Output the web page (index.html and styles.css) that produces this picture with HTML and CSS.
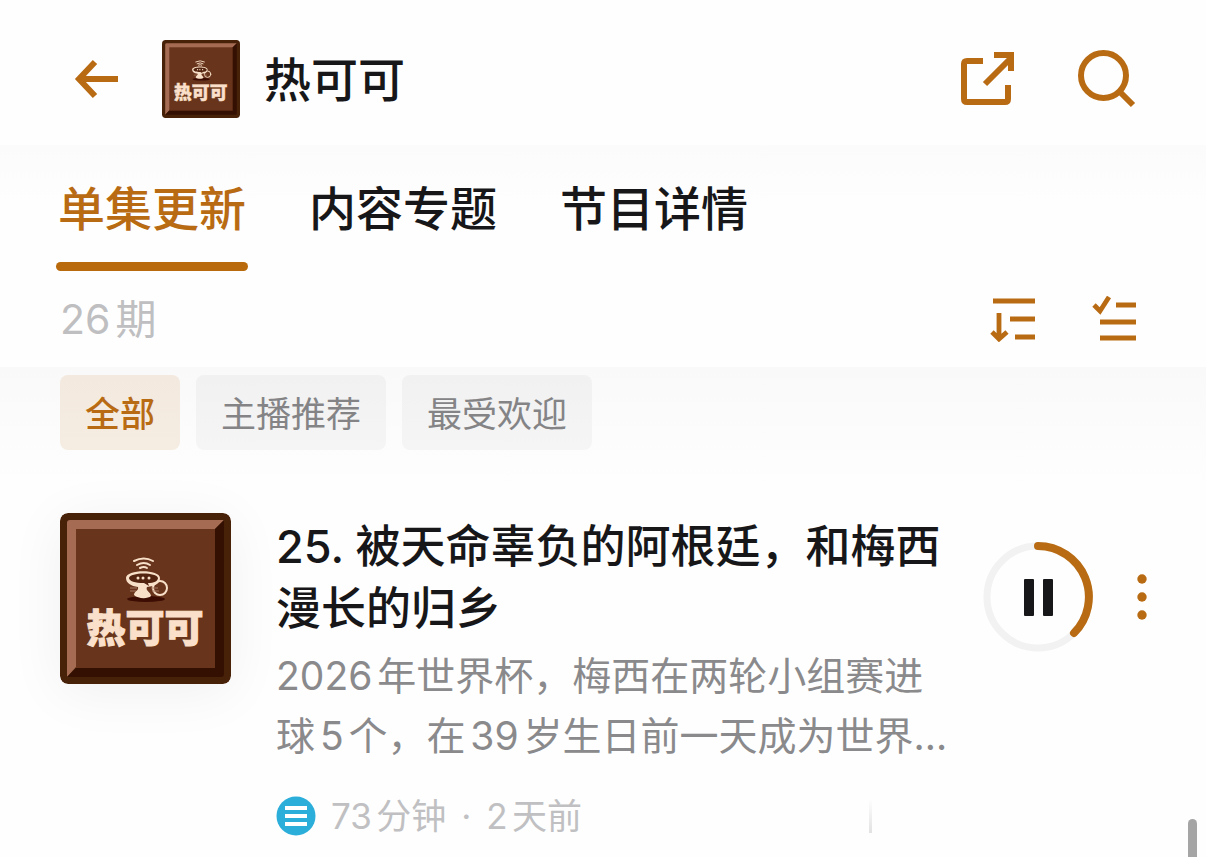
FILE: index.html
```html
<!DOCTYPE html>
<html lang="zh-CN">
<head>
<meta charset="utf-8">
<meta name="viewport" content="width=device-width, initial-scale=1">
<title>热可可</title>
<link rel="stylesheet" href="styles.css">
</head>
<body>
<svg class="defs" aria-hidden="true">
  <symbol id="cover" viewBox="0 0 171 171">
    <rect width="171" height="171" rx="8" fill="#482109"/>
    <path d="M7 10a3 3 0 0 1 3-3H164L154 17 16 154 7 164Z" fill="#a56c53"/>
    <path d="M164 7V161a3 3 0 0 1-3 3H7L17 154 154 17Z" fill="#341002"/>
    <rect x="16" y="16" width="139" height="139" fill="#68341c"/>
    <ellipse cx="86" cy="86" rx="19" ry="3" fill="#3d0d04"/>
    <g fill="none" stroke="#f8dfc8" stroke-linecap="round">
      <path d="M74 48q10-5 19 0M77 52q7-4 13 0" stroke-width="2"/>
      <path d="M80 55q4-2 7 0" stroke-width="2"/>
      <circle cx="100" cy="75" r="7" stroke-width="2"/>
    </g>
    <path d="M66 65c0-9 34-9 34 0 0 5-4 7-7 8l-6 1c-2 4 4 5 4 9-3 3-13 3-17-1 0-4 5-4 4-8-7-1-12-4-12-9Z" fill="#f8dfc8"/>
    <path d="M69 65c1-6 28-6 29 0 0 3-4 5-10 5l1 3-5-3c-9 0-15-2-15-5Z" fill="#53240f"/>
    <g fill="#f8dfc8"><circle cx="78" cy="65" r="1.5"/><circle cx="83" cy="65" r="1.5"/><circle cx="89" cy="65" r="1.5"/></g>
    <path d="M70 75h7M70 78h6M91 75h7M92 78h7" stroke="#a77961"/>
  </symbol>
</svg>

<header class="topbar">
  <button class="icon-button" aria-label="返回">
    <svg width="44" height="40" viewBox="0 0 44 40"><path d="M21 3 5 20l16 17M5 20h39" fill="none" stroke="currentColor" stroke-width="6"/></svg>
  </button>
  <svg class="topbar-cover" viewBox="0 0 171 171" role="img" aria-label="热可可封面"><use href="#cover"/><text x="85" y="129" text-anchor="middle" class="cover-text">热可可</text></svg>
  <h1 class="topbar-title">热可可</h1>
  <button class="icon-button" aria-label="分享">
    <svg width="56" height="56" viewBox="0 0 56 56"><path d="M23 10H7Q4 10 4 13V48q0 3 3 3H45q3 0 3-3V34M25 33 50 8" fill="none" stroke="currentColor" stroke-width="6"/><path d="M34 1H54V20H48V7H34Z" fill="currentColor"/></svg>
  </button>
  <button class="icon-button" aria-label="搜索">
    <svg width="58" height="58" viewBox="0 0 58 58"><circle cx="25.500" cy="25.500" r="22.500" fill="none" stroke="currentColor" stroke-width="6"/><path d="m41 41 14 14" stroke="currentColor" stroke-width="6"/></svg>
  </button>
</header>

<section class="panel">
  <nav class="tabs">
    <a class="tab tab-active" href="#episodes" aria-current="page">单集更新</a>
    <a class="tab" href="#topics">内容专题</a>
    <a class="tab" href="#details">节目详情</a>
  </nav>
  <div class="toolbar">
    <span class="count">26期</span>
    <button class="icon-button" aria-label="排序">
      <svg width="46" height="46" viewBox="0 0 46 46"><path d="M3 5h42M20 23h25M25 41h20M9 17v27M2 36l7 7 8-7" fill="none" stroke="currentColor" stroke-width="4.800"/></svg>
    </button>
    <button class="icon-button" aria-label="多选">
      <svg width="46" height="46" viewBox="0 0 46 46"><path d="m2 9 6 6L17 1M24 9h20M8 26h36M8 42h36" fill="none" stroke="currentColor" stroke-width="4.800"/></svg>
    </button>
  </div>
</section>

<main class="content" id="episodes">
  <div class="chips">
    <button class="chip chip-active" aria-pressed="true">全部</button>
    <button class="chip" aria-pressed="false">主播推荐</button>
    <button class="chip" aria-pressed="false">最受欢迎</button>
  </div>

  <article class="episode">
    <svg class="episode-cover" viewBox="0 0 171 171" role="img" aria-label="热可可封面"><use href="#cover"/><text x="85" y="129" text-anchor="middle" class="cover-text">热可可</text></svg>
    <div class="episode-body">
      <h2 class="episode-title">25. 被天命辜负的阿根廷，和梅西漫长的归乡</h2>
      <p class="episode-summary">2026年世界杯，梅西在两轮小组赛进<br>球5个，在39岁生日前一天成为世界…</p>
      <div class="meta">
        <svg width="40" height="40" viewBox="0 0 40 40" aria-hidden="true"><circle cx="20" cy="20" r="19.500" fill="#2baeda"/><path d="M9 12h22M9 20h22M9 28h22" stroke="#fff" stroke-width="4"/></svg>
        <span>73分钟</span>
        <span>·</span>
        <span>2天前</span>
        <i class="meta-fade"></i>
      </div>
    </div>
    <div class="episode-actions">
      <button class="icon-button" aria-label="暂停">
        <svg width="110" height="110" viewBox="0 0 110 110"><circle cx="55" cy="55" r="51" fill="none" stroke="#f2f2f2" stroke-width="7"/><path d="M55 4A51 51 0 0 1 91 91" fill="none" stroke="#b86b13" stroke-width="8" stroke-linecap="round"/><rect x="41" y="37" width="10" height="37" rx="1" fill="#171719"/><rect x="60" y="37" width="10" height="37" rx="1" fill="#171719"/></svg>
      </button>
      <button class="icon-button" aria-label="更多">
        <svg width="10" height="48" viewBox="0 0 10 48"><g fill="currentColor"><circle cx="5" cy="6" r="4.700"/><circle cx="5" cy="24" r="4.700"/><circle cx="5" cy="42" r="4.700"/></g></svg>
      </button>
    </div>
  </article>
</main>
<div class="scroll-thumb"></div>
</body>
</html>
```
FILE: styles.css
```css
* {
  box-sizing: border-box;
}

body {
  margin: 0;
  background: #fefefe;
  color: #171719;
  font-family: Inter, "Noto Sans CJK SC", sans-serif;
  text-autospace: normal;
}

h1, h2, p {
  margin: 0;
}

svg {
  display: block;
}

.defs {
  position: absolute;
  width: 0;
  height: 0;
}

.cover-text {
  font-family: "Noto Sans CJK SC", sans-serif;
  font-size: 39px;
  font-weight: 900;
  fill: #fae0ca;
  stroke: #fae0ca;
  stroke-width: 1px;
}

.icon-button {
  display: block;
  flex: none;
  padding: 0;
  border: 0;
  background: none;
  color: #b86b13;
}

.topbar {
  display: flex;
  align-items: center;
  padding: 40px 70px 27px 74px;
}

.topbar-cover {
  width: 78px;
  height: 78px;
  margin: 0 24px 0 44px;
}

.topbar-title {
  flex: 1;
  padding-top: 2px;
  font-size: 47px;
  font-weight: 500;
  line-height: 76px;
}

.topbar .icon-button + .icon-button {
  margin-left: 62px;
}

.panel {
  padding: 27px 68px 20px 56px;
  background: linear-gradient(#fbfbfb, #fefefe 60px);
}

.tabs {
  display: flex;
  gap: 59px;
}

.tab {
  padding: 0 2px 17px;
  border-bottom: 9px solid transparent;
  color: inherit;
  font-size: 47px;
  font-weight: 500;
  line-height: 73px;
  text-decoration: none;
}

.tab-active {
  position: relative;
  color: #b86b13;
}

.tab-active::after {
  content: "";
  position: absolute;
  left: 0;
  right: 0;
  bottom: -9px;
  height: 9px;
  border-radius: 5px;
  background: #b96a0c;
}

.toolbar {
  display: flex;
  align-items: center;
  gap: 56px;
  padding: 20px 0 0 4px;
}

.count {
  flex: 1;
  color: #bfbfc1;
  font-size: 41px;
  line-height: 56px;
}

.content {
  padding: 8px 59px 0 60px;
  background: linear-gradient(#f9f9f9, #fefefe 120px);
}

.chips {
  display: flex;
  gap: 16px;
}

.chip {
  padding: 4px 25px 0;
  border: 0;
  border-radius: 8px;
  background: linear-gradient(#f1f1f1, #f5f5f6);
  color: #848486;
  font: inherit;
  font-size: 35px;
  line-height: 71px;
}

.chip-active {
  background: linear-gradient(#f3e9de, #f6ede2);
  color: #b86b13;
  font-weight: 500;
}

.episode {
  display: flex;
  align-items: flex-start;
  padding-top: 63px;
}

.episode-cover {
  flex: none;
  width: 171px;
  height: 171px;
  margin-right: 45px;
  border-radius: 8px;
  box-shadow: 0 8px 56px rgba(0, 0, 0, 0.06);
}

.episode-body {
  flex: 1;
  min-width: 0;
}

.episode-title {
  padding-top: 3px;
  font-size: 45px;
  font-weight: 500;
  line-height: 62px;
}

.episode-summary {
  padding-top: 6px;
  color: #8a8a8c;
  font-size: 39px;
  line-height: 60px;
  white-space: nowrap;
}

.meta {
  display: flex;
  align-items: center;
  gap: 15px;
  padding-top: 29px;
  color: #c0c0c2;
  font-size: 35px;
  line-height: 42px;
}

.meta-fade {
  width: 3px;
  height: 34px;
  margin-left: 272px;
  background: linear-gradient(#fefefe, #e2e2e2);
}

.episode-actions {
  display: flex;
  align-items: center;
  gap: 44px;
  margin: 29px 0 0 24px;
}

.scroll-thumb {
  position: absolute;
  right: 9px;
  bottom: 0;
  width: 9px;
  height: 38px;
  border-radius: 5px 5px 0 0;
  background: #a5a5a5;
}
```
